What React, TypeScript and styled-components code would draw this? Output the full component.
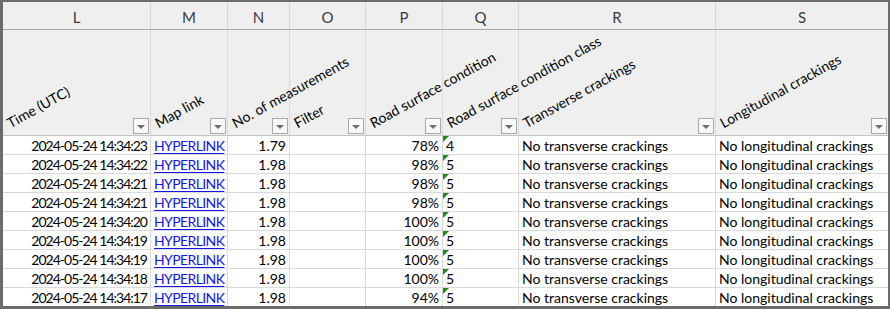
import React from "react";
import styled, { createGlobalStyle } from "styled-components";

const GlobalStyle = createGlobalStyle`
  html, body {
    margin: 0;
    padding: 0;
    background: #ffffff;
  }
`;

type Align = "left" | "right";

interface Column {
  letter: string;
  width: number;
  title: string;
}

const COLUMNS: Column[] = [
  { letter: "L", width: 148, title: "Time (UTC)" },
  { letter: "M", width: 77, title: "Map link" },
  { letter: "N", width: 62, title: "No. of measurements" },
  { letter: "O", width: 76, title: "Filter" },
  { letter: "P", width: 77, title: "Road surface condition" },
  { letter: "Q", width: 76, title: "Road surface condition class" },
  { letter: "R", width: 197, title: "Transverse crackings" },
  { letter: "S", width: 172, title: "Longitudinal crackings" },
];

const TEMPLATE = COLUMNS.map((c) => `${c.width}px`).join(" ");

interface Reading {
  time: string;
  measurements: string;
  condition: string;
  conditionClass: string;
}

const READINGS: Reading[] = [
  { time: "2024-05-24 14:34:23", measurements: "1.79", condition: "78%", conditionClass: "4" },
  { time: "2024-05-24 14:34:22", measurements: "1.98", condition: "98%", conditionClass: "5" },
  { time: "2024-05-24 14:34:21", measurements: "1.98", condition: "98%", conditionClass: "5" },
  { time: "2024-05-24 14:34:21", measurements: "1.98", condition: "98%", conditionClass: "5" },
  { time: "2024-05-24 14:34:20", measurements: "1.98", condition: "100%", conditionClass: "5" },
  { time: "2024-05-24 14:34:19", measurements: "1.98", condition: "100%", conditionClass: "5" },
  { time: "2024-05-24 14:34:19", measurements: "1.98", condition: "100%", conditionClass: "5" },
  { time: "2024-05-24 14:34:18", measurements: "1.98", condition: "100%", conditionClass: "5" },
  { time: "2024-05-24 14:34:17", measurements: "1.98", condition: "94%", conditionClass: "5" },
];

const Sheet = styled.div`
  width: 890px;
  height: 309px;
  box-sizing: border-box;
  border-style: solid;
  border-color: #6b6b6b;
  border-width: 2px 2px 3px 3px;
  overflow: hidden;
  background: #ffffff;
  font-family: Lato, "Liberation Sans", sans-serif;
  color: #000000;
`;

const Row = styled.div`
  display: grid;
  grid-template-columns: ${TEMPLATE};
`;

const LetterRow = styled(Row)`
  background: #efefef;
  border-bottom: 1px solid #ababab;
`;

const LetterCell = styled.div`
  height: 27px;
  box-sizing: border-box;
  border-right: 1px solid #d6d6d6;
  display: flex;
  align-items: flex-end;
  justify-content: center;
  padding-bottom: 3px;
  font-size: 15px;
  line-height: 17px;
  color: #3c3c3c;

  &:last-child {
    border-right: none;
  }
`;

const TitleRow = styled(Row)`
  background: #efefef;
  border-bottom: 1px solid #c3c3c3;
`;

const TitleCell = styled.div`
  height: 105px;
  box-sizing: border-box;
  border-right: 1px solid #dadada;
  display: flex;
  align-items: flex-end;
  padding: 0 1px 1px 9px;

  &:last-child {
    border-right: none;
  }
`;

const TitleText = styled.span`
  width: 0;
  white-space: nowrap;
  font-size: 14px;
  line-height: 16px;
  margin-bottom: 3px;
  transform-origin: 0 100%;
  transform: rotate(-29deg);
`;

const FilterButton = styled.span`
  margin-left: auto;
  width: 16px;
  height: 16px;
  box-sizing: border-box;
  border: 1px solid #a9a9a9;
  background: #f8f8f8;
  display: flex;
  align-items: center;
  justify-content: center;

  &::after {
    content: "";
    margin-top: 1px;
    border-left: 4px solid transparent;
    border-right: 4px solid transparent;
    border-top: 4px solid #6e6e6e;
  }
`;

const DataRow = styled(Row)`
  &:last-child > div {
    border-bottom: none;
  }
`;

const DataCell = styled.div<{ $align: Align; $tight?: boolean }>`
  position: relative;
  height: 19px;
  box-sizing: border-box;
  border-right: 1px solid #dadada;
  border-bottom: 1px solid #dadada;
  padding: 0 3px;
  font-size: 14px;
  line-height: 19px;
  white-space: nowrap;
  overflow: hidden;
  text-align: ${(p) => p.$align};
  letter-spacing: ${(p) => (p.$tight ? "-1px" : "normal")};

  &:last-child {
    border-right: none;
  }
`;

const Link = styled.span`
  color: #1414e8;
  letter-spacing: -0.6px;
  text-decoration: underline;
  text-underline-offset: 2px;
`;

// the little green error marker Excel puts on numbers stored as text
const ErrorMark = styled.span`
  position: absolute;
  top: 0;
  left: 0;
  border-top: 6px solid #1c8a1c;
  border-right: 6px solid transparent;
`;

const App: React.FC = () => {
  return (
    <>
      <GlobalStyle />
      <Sheet>
        <LetterRow>
          {COLUMNS.map((c) => (
            <LetterCell key={c.letter}>{c.letter}</LetterCell>
          ))}
        </LetterRow>

        <TitleRow>
          {COLUMNS.map((c) => (
            <TitleCell key={c.letter}>
              <TitleText>{c.title}</TitleText>
              <FilterButton />
            </TitleCell>
          ))}
        </TitleRow>

        {READINGS.map((r, i) => (
          <DataRow key={i}>
            <DataCell $align='right' $tight>
              {r.time}
            </DataCell>
            <DataCell $align='left'>
              <Link>HYPERLINK</Link>
            </DataCell>
            <DataCell $align='right'>{r.measurements}</DataCell>
            <DataCell $align='left' />
            <DataCell $align='right'>{r.condition}</DataCell>
            <DataCell $align='left'>
              <ErrorMark />
              {r.conditionClass}
            </DataCell>
            <DataCell $align='left'>No transverse crackings</DataCell>
            <DataCell $align='left'>No longitudinal crackings</DataCell>
          </DataRow>
        ))}
      </Sheet>
    </>
  );
};

export default App;
